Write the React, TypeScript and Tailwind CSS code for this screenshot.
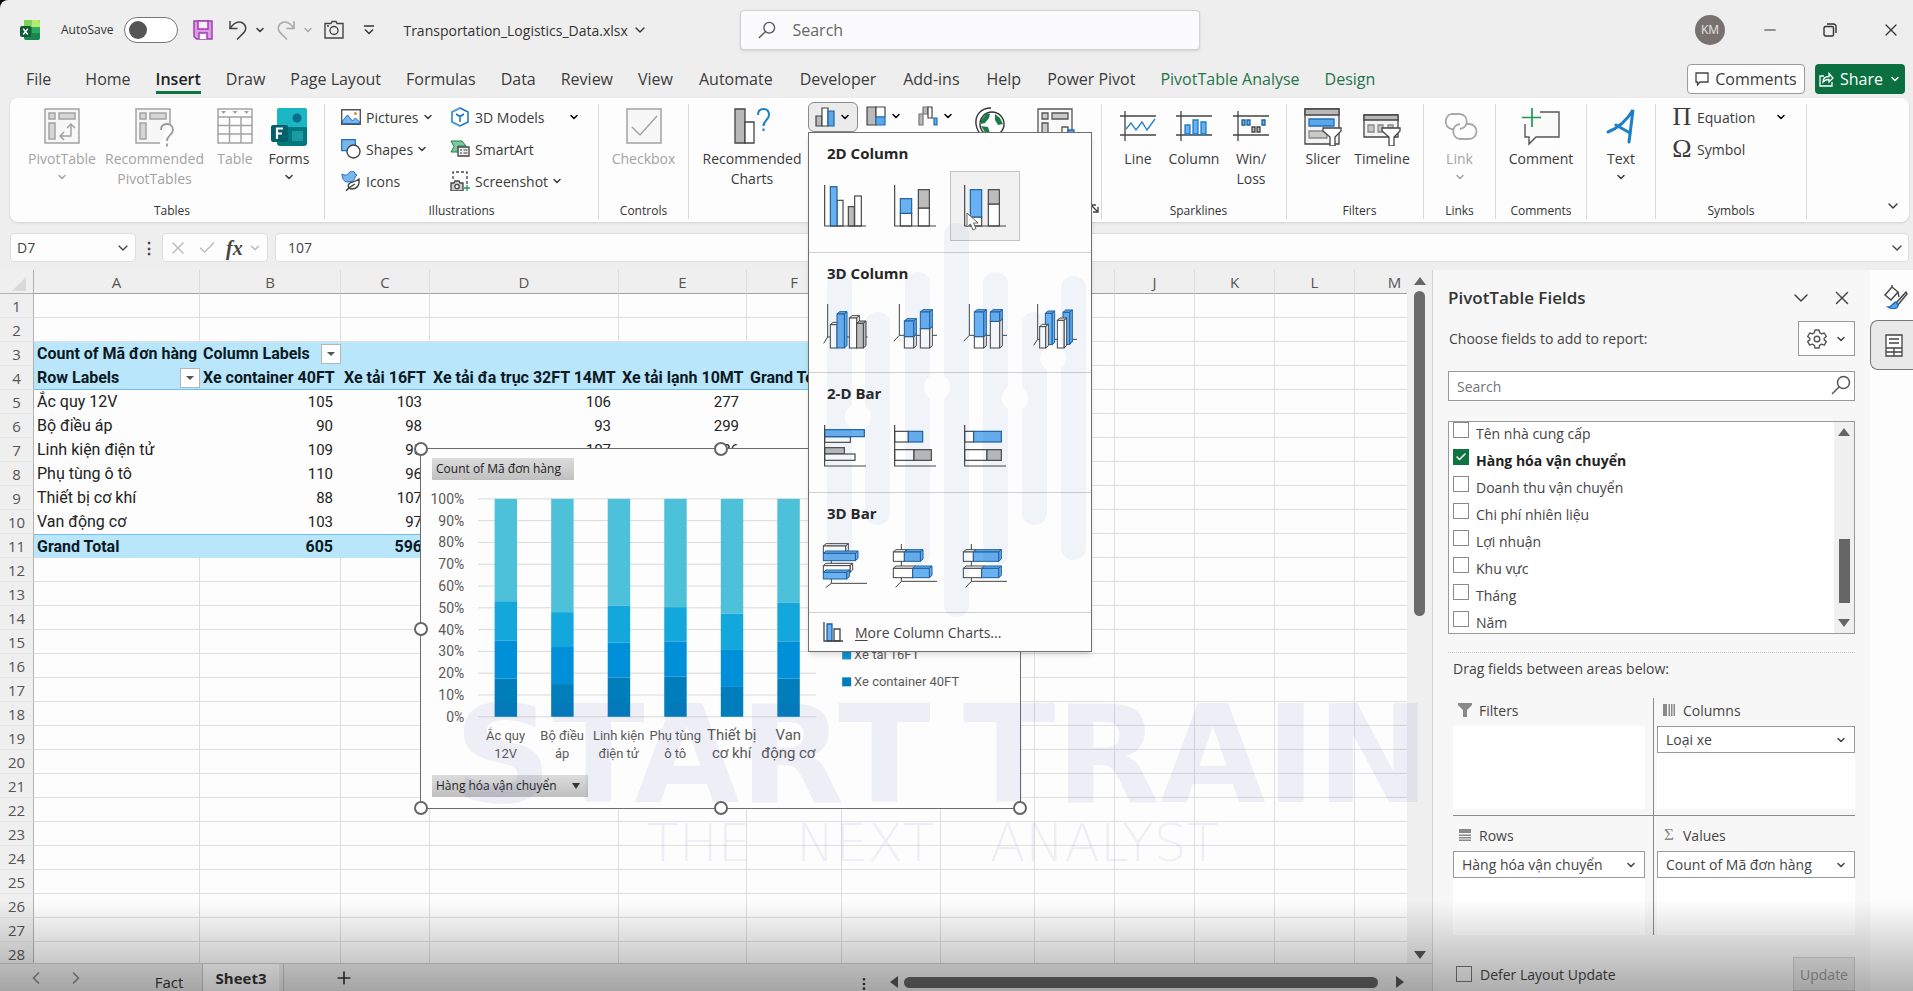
import React from 'react';
import { ChevronDown, ChevronLeft, ChevronRight, EllipsisVertical, Minus, Plus, X, Check } from 'lucide-react';

type IconProps = { className?: string };

const tabs = [
  'File', 'Home', 'Insert', 'Draw', 'Page Layout', 'Formulas', 'Data', 'Review', 'View',
  'Automate', 'Developer', 'Add-ins', 'Help', 'Power Pivot', 'PivotTable Analyse', 'Design',
];

const columns = [
  { name: 'A', width: 'w-[166px]' },
  { name: 'B', width: 'w-[141px]' },
  { name: 'C', width: 'w-[89px]' },
  { name: 'D', width: 'w-[189px]' },
  { name: 'E', width: 'w-[128px]' },
  { name: 'F', width: 'w-[95px]' },
  { name: 'G', width: 'w-[99px]' },
  { name: 'H', width: 'w-[94px]' },
  { name: 'I', width: 'w-[80px]' },
  { name: 'J', width: 'w-[80px]' },
  { name: 'K', width: 'w-[80px]' },
  { name: 'L', width: 'w-[80px]' },
  { name: 'M', width: 'w-[80px]' },
];

const cells: Record<number, string[]> = {
  3: ['Count of Mã đơn hàng', 'Column Labels'],
  4: ['Row Labels', 'Xe container 40FT', 'Xe tải 16FT', 'Xe tải đa trục 32FT 14MT', 'Xe tải lạnh 10MT', 'Grand Total'],
  5: ['Ắc quy 12V', '105', '103', '106', '277'],
  6: ['Bộ điều áp', '90', '98', '93', '299'],
  7: ['Linh kiện điện tử', '109', '95', '107', '286'],
  8: ['Phụ tùng ô tô', '110', '96'],
  9: ['Thiết bị cơ khí', '88', '107'],
  10: ['Van động cơ', '103', '97'],
  11: ['Grand Total', '605', '596'],
};

const fields = [
  'Tên nhà cung cấp', 'Hàng hóa vận chuyển', 'Doanh thu vận chuyển', 'Chi phí nhiên liệu',
  'Lợi nhuận', 'Khu vực', 'Tháng', 'Năm',
];

// cumulative share of each vehicle type, bottom to top
const bars = [
  { label: ['Ắc quy', '12V'], stops: [17.5, 35, 53] },
  { label: ['Bộ điều', 'áp'], stops: [15, 32, 48] },
  { label: ['Linh kiện', 'điện tử'], stops: [18, 34, 51] },
  { label: ['Phụ tùng', 'ô tô'], stops: [18.4, 34.6, 50.3] },
  { label: ['Thiết bị', 'cơ khí'], stops: [13.7, 31, 47.3] },
  { label: ['Van', 'động cơ'], stops: [17.5, 34.6, 52.3] },
];

const Caret = ({ className = '' }: IconProps) => (
  <ChevronDown className={`w-3 h-3 shrink-0 ${className}`} strokeWidth={3} />
);

/* ---------- title bar icons ---------- */

const ExcelLogo = () => (
  <svg className="w-5 h-5" viewBox="0 0 20 20">
    <rect x="4" y="0" width="16" height="20" rx="2" fill="#17864b" />
    <path d="M4 2a2 2 0 0 1 2-2h6v7H4z" fill="#7fd35b" />
    <path d="M12 0h6a2 2 0 0 1 2 2v5h-8z" fill="#b5ea6a" />
    <path d="M12 7h8v6h-8z" fill="#2fa862" />
    <rect x="0" y="6" width="11" height="11" rx="2" fill="#0d5c33" />
    <path d="M3.2 8.800l4.600 5.600M7.800 8.800l-4.600 5.600" stroke="#fff" strokeWidth="1.500" />
  </svg>
);

const SaveIcon = () => (
  <svg className="w-5 h-5" viewBox="0 0 20 20" fill="none" stroke="#a13fb0" strokeWidth="1.500">
    <path d="M1 1h18v18H3.500L1 16.500z" fill="#dd9be6" />
    <path d="M5 1h10v8H5z" fill="#fbeefc" />
    <path d="M6 19v-6h8v6" fill="#fff" />
  </svg>
);

const UndoIcon = ({ className = '' }: IconProps) => (
  <svg className={`w-5 h-5 ${className}`} viewBox="0 0 20 20" fill="none" stroke="currentColor" strokeWidth="1.500">
    <path d="M2 1v7.500h7.500" />
    <path d="M2 8.500C5 4 9 1 13 2.200c5 1.600 6 7 3 10.200L9 19.500" />
  </svg>
);

const CameraIcon = () => (
  <svg className="w-5 h-5" viewBox="0 0 20 20" fill="none" stroke="#444" strokeWidth="1.400">
    <path d="M1 3.500h6l1-2h4l1 2h6V18H1z" />
    <circle cx="10" cy="10.500" r="4" />
    <path d="M3 6h2" />
  </svg>
);

const SearchIcon = ({ className = '' }: IconProps) => (
  <svg className={className} viewBox="0 0 20 20" fill="none" stroke="#555" strokeWidth="1.500">
    <circle cx="12.500" cy="7.500" r="6" />
    <path d="M8.300 11.800L1 19" />
  </svg>
);

/* ---------- ribbon icons ---------- */

const PivotTableIcon = () => (
  <svg className="w-9 h-9" viewBox="0 0 36 36" fill="#d6d6d6" stroke="#a3a3a3" strokeWidth="1.500">
    <path d="M1 1h34v34H1z" fill="#f7f7f7" />
    <path d="M5 5h6v6H5zM15 5h16v6H15zM5 15h6v16H5z" />
    <path d="M17 28h10V17M20 24l-4 4 4 4M23 20l4-4 4 4" fill="none" />
  </svg>
);

const RecommendedPivotIcon = () => (
  <svg className="w-10 h-10" viewBox="0 0 40 40" fill="#d6d6d6" stroke="#a3a3a3" strokeWidth="1.500">
    <path d="M35 16V1H1v34h24" fill="#f7f7f7" />
    <path d="M5 5h6v6H5zM15 5h16v6H15zM5 15h6v16H5z" />
    <path d="M26 22c0-5 3-6 6-6s6 2 6 6c0 5-6 5-6 11M32 35.500v3" fill="none" stroke="#999" strokeWidth="1.800" />
  </svg>
);

const TableIcon = () => (
  <svg className="w-9 h-9" viewBox="0 0 36 36" fill="none" stroke="#a3a3a3" strokeWidth="1.500">
    <path d="M1 1h34v34H1zM1 9h34M1 17.500h34M1 26h34M12.500 9v26M24 9v26" />
    <path d="M4 3h5l-2.500 3zM15.500 3h5L18 6zM27 3h5l-2.500 3z" fill="#a3a3a3" stroke="none" />
  </svg>
);

const FormsIcon = () => (
  <svg className="w-9 h-[38px]" viewBox="0 0 36 38">
    <rect x="6" y="0" width="30" height="38" rx="3" fill="#03787c" />
    <path d="M9 0h24a3 3 0 0 1 3 3v16H6V3a3 3 0 0 1 3-3z" fill="#1bb6c4" />
    <circle cx="26" cy="10" r="4.500" fill="#0a6d8e" />
    <rect x="21" y="23" width="11" height="10" fill="#1a9ba1" />
    <rect x="0" y="17" width="17" height="17" rx="2" fill="#02606c" />
    <path d="M6 31V20.500h6M6 25.500h5" stroke="#fff" strokeWidth="2.200" fill="none" />
  </svg>
);

const PicturesIcon = () => (
  <svg className="w-5 h-4" viewBox="0 0 20 16">
    <path d="M.7.7h18.600v14.600H.7z" fill="#fff" stroke="#555" strokeWidth="1.400" />
    <path d="M1.500 12l5-6 5 6 3-3 4 4v1.500h-17z" fill="#7ab5ec" stroke="#1f6fc0" />
    <circle cx="14.500" cy="4.500" r="1.500" fill="#e08a3c" />
  </svg>
);

const ShapesIcon = () => (
  <svg className="w-5 h-5" viewBox="0 0 20 20">
    <path d="M.7.7h13.600v11H.7z" fill="#7ab5ec" stroke="#1f6fc0" strokeWidth="1.200" />
    <circle cx="12.500" cy="12.500" r="6.500" fill="#fff" stroke="#444" strokeWidth="1.400" />
  </svg>
);

const IconsIcon = () => (
  <svg className="w-5 h-5" viewBox="0 0 20 20">
    <path d="M1 3c3 2 6 1 7-1 2-3 6-2 6 1l2 1-2 2c0 4-4 5-8 5C3 11 1 7 1 3z" fill="#7ab5ec" stroke="#1f6fc0" />
    <path d="M18 8c1 6-2 10-7 10-4 0-5-4-2-6 3-2 6-1 9-4z" fill="#fff" stroke="#444" strokeWidth="1.300" />
    <path d="M5 20c3-4 6-5 9-7" stroke="#444" fill="none" strokeWidth="1.300" />
  </svg>
);

const CubeIcon = () => (
  <svg className="w-5 h-5" viewBox="0 0 20 20" fill="#fff" stroke="#1f6fc0" strokeWidth="1.500">
    <path d="M10 1l8 4v10l-8 4-8-4V5z" />
    <path d="M6 7l4 2.500L14 7M10 9.500V15" fill="none" />
    <path d="M10 1L2 5v10l8 4" stroke="#4e9de0" fill="none" />
  </svg>
);

const SmartArtIcon = () => (
  <svg className="w-5 h-5" viewBox="0 0 20 20">
    <path d="M1 2h11l4 5H8v6H1l3-5.500z" fill="#7fc79d" stroke="#1d7f49" />
    <path d="M8 8h11v9H8z" fill="#eee" stroke="#444" strokeWidth="1.300" />
    <path d="M10 11h2M13.500 11h4M10 14h2M13.500 14h4" stroke="#444" />
  </svg>
);

const ScreenshotIcon = () => (
  <svg className="w-5 h-5" viewBox="0 0 20 20" fill="none" stroke="#444" strokeWidth="1.300">
    <path d="M3 8V1h14v13" strokeDasharray="3 2" />
    <path d="M1 12h3l1-2h4l1 2h3v8H1z" fill="#ccc" />
    <circle cx="7" cy="15.500" r="2.200" fill="#fff" />
    <path d="M17 14v6M14 17h6" stroke="#1d9a55" />
  </svg>
);

const CheckboxIcon = () => (
  <svg className="w-9 h-9" viewBox="0 0 36 36" fill="#f7f7f7" stroke="#a3a3a3" strokeWidth="1.500">
    <path d="M1 1h34v34H1z" />
    <path d="M6 19l8 8L31 8" fill="none" />
  </svg>
);

const RecommendedChartsIcon = () => (
  <svg className="w-9 h-9" viewBox="0 0 36 36" stroke="#444" strokeWidth="1.300">
    <path d="M1 1h10v34H1z" fill="#b9b9b9" />
    <path d="M11 14h9v21h-9z" fill="#fff" />
    <path d="M24 7c0-4 2-6 5.500-6S35 3 35 7c0 5-5.500 5-5.500 11M29.500 20.500v2.500" fill="none" stroke="#1e7fc9" strokeWidth="2" />
  </svg>
);

const ColumnSmallIcon = () => (
  <svg className="w-5 h-5" viewBox="0 0 20 20" stroke="#444" strokeWidth="1.200">
    <path d="M1 9h6v10H1z" fill="#b9b9b9" />
    <path d="M7 1h6v18H7z" fill="#fff" />
    <path d="M13 4h6v15h-6z" fill="#5aa7ea" stroke="#1f5f9f" />
  </svg>
);

const TreemapIcon = () => (
  <svg className="w-5 h-5" viewBox="0 0 20 20" stroke="#444" strokeWidth="1.200">
    <path d="M1 1h9v18H1z" fill="#b9b9b9" />
    <path d="M10 1h9v10h-9z" fill="#fff" />
    <path d="M10 11h9v8h-9z" fill="#5aa7ea" stroke="#1f6fc0" />
  </svg>
);

const WaterfallIcon = () => (
  <svg className="w-5 h-5" viewBox="0 0 20 20" strokeWidth="1.200">
    <path d="M1 8h4v11H1z" fill="#b9b9b9" stroke="#777" />
    <path d="M5 1h5v7H5z" fill="#b9b9b9" stroke="#777" />
    <path d="M10 1h4v11h-4z" fill="#fff" stroke="#444" />
    <path d="M16 12h3v7h-3zM14 12h3" fill="#5aa7ea" stroke="#1f6fc0" />
  </svg>
);

const GlobeIcon = () => (
  <svg className="w-[30px] h-9" viewBox="0 0 30 36">
    <circle cx="17" cy="17" r="12" fill="#fff" stroke="#333" strokeWidth="1.400" />
    <path d="M6 13l6-7 3 1-1 4-4 5-4 1zM20 7l5 4 3 6-5 1-3-5zM6 19l7 1 2 6-4 1z" fill="#1c7c48" />
    <path d="M16 1C6 1 0 8 1 17c1 9 8 15 17 15" fill="none" stroke="#333" strokeWidth="1.400" />
  </svg>
);

const PivotChartIcon = () => (
  <svg className="w-[38px] h-9" viewBox="0 0 38 36" fill="#c9c9c9" stroke="#555" strokeWidth="1.300">
    <path d="M1 1h34v34H1z" fill="#fafafa" />
    <path d="M5 5h6v6H5zM15 5h16v6H15zM5 15h6v16H5z" />
    <path d="M25 19h6v16h-6z" fill="#fff" />
    <path d="M31 22h6v13h-6z" fill="#5aa7ea" stroke="#1f6fc0" />
  </svg>
);

const SparkFrame = ({ children }: { children: React.ReactNode }) => (
  <svg className="w-9 h-9" viewBox="0 0 36 36" fill="none" stroke="#444" strokeWidth="1.300">
    <path d="M0 8h36M0 27h36M5 3v30" />
    {children}
  </svg>
);

const SlicerIcon = () => (
  <svg className="w-[38px] h-[38px]" viewBox="0 0 38 38" stroke="#444" strokeWidth="1.300">
    <path d="M1 1h34v35H1z" fill="#f3f3f3" />
    <path d="M1 1h34v6H1z" fill="#b9b9b9" />
    <path d="M5 11h25v7H5z" fill="#5aa7ea" stroke="#1f6fc0" />
    <path d="M5 23h18v7H5z" fill="#c9c9c9" stroke="#888" />
    <path d="M19 20h18v3l-6 6v9h-5v-9l-7-6z" fill="#fff" />
  </svg>
);

const TimelineIcon = () => (
  <svg className="w-[38px] h-[38px]" viewBox="0 0 38 38" stroke="#444" strokeWidth="1.300">
    <path d="M1 7h34v22H1z" fill="#f3f3f3" />
    <path d="M1 7h34v5H1z" fill="#b9b9b9" />
    <path d="M5 17h6v7H5zM15 17h5v7h-5zM25 17h5v7h-5z" fill="#c9c9c9" stroke="#888" />
    <path d="M19 20h18v3l-6 6v9h-5v-9l-7-6z" fill="#fff" />
  </svg>
);

const LinkIcon = () => (
  <svg className="w-9 h-9" viewBox="0 0 36 36" fill="none" stroke="#a8a8a8" strokeWidth="1.800">
    <path d="M12 21H9a8 8 0 0 1 0-15h9c9 1 9 13 0 15" />
    <path d="M24 16h3a7 7 0 0 1 0 15h-9c-9-1-9-14 0-15" />
  </svg>
);

const CommentIcon = () => (
  <svg className="w-[38px] h-[38px]" viewBox="0 0 38 38" fill="none" stroke="#555" strokeWidth="1.400">
    <path d="M18 4h19v25H14l-7 7v-7H3V16" fill="#fafafa" />
    <path d="M10 0v19M0 9.500h19" stroke="#1d9a55" strokeWidth="1.700" />
  </svg>
);

const TextIcon = () => (
  <svg className="w-9 h-9" viewBox="0 0 36 36" fill="none" stroke="#1e7fc9" strokeWidth="3" strokeLinecap="round">
    <path d="M5 24C15 20 24 12 30 2l-4 32" />
    <path d="M13 17l14 8" />
  </svg>
);

/* ---------- chart gallery icons ---------- */

const BLUE = '#69b1f0';
const GRAY = '#bcbcbc';
const WHITE = '#fff';

type Part = { x: number; y: number; w: number; h: number; fill: string };

const edge = (fill: string) => (fill === BLUE ? '#1d5f9e' : '#444');

const Gallery = ({ children }: { children: React.ReactNode }) => (
  <svg className="w-12 h-12" viewBox="0 0 144 144" fill="none" stroke="#444" strokeWidth="3.500">
    {children}
  </svg>
);

const Flat = ({ parts }: { parts: Part[] }) => (
  <Gallery>
    {parts.map((p, i) => (
      <rect key={i} x={p.x} y={p.y} width={p.w} height={p.h} fill={p.fill} stroke={edge(p.fill)} />
    ))}
    <path d="M11 9V132H135" />
  </Gallery>
);

const Solid = ({ parts, axis }: { parts: Part[]; axis: string }) => (
  <Gallery>
    <path d={axis} strokeWidth="3" />
    {parts.map((p, i) => (
      <g key={i} fill={p.fill} stroke={edge(p.fill)} strokeWidth="3">
        <path d={`M${p.x} ${p.y}l8 -7h${p.w}l-8 7z`} />
        <path d={`M${p.x + p.w} ${p.y}l8 -7v${p.h}l-8 7z`} />
        <rect x={p.x} y={p.y} width={p.w} height={p.h} />
      </g>
    ))}
  </Gallery>
);

const sections = [
  {
    title: '2D Column',
    items: [
      <Flat parts={[
        { x: 48, y: 55, w: 18, h: 77, fill: WHITE }, { x: 28, y: 14, w: 20, h: 118, fill: BLUE },
        { x: 82, y: 74, w: 18, h: 58, fill: GRAY }, { x: 101, y: 42, w: 20, h: 90, fill: WHITE },
      ]} />,
      <Flat parts={[
        { x: 28, y: 94, w: 34, h: 38, fill: WHITE }, { x: 28, y: 50, w: 34, h: 44, fill: BLUE },
        { x: 82, y: 78, w: 33, h: 54, fill: WHITE }, { x: 82, y: 23, w: 33, h: 55, fill: GRAY },
      ]} />,
      <Flat parts={[
        { x: 28, y: 105, w: 34, h: 27, fill: WHITE }, { x: 28, y: 23, w: 34, h: 82, fill: BLUE },
        { x: 82, y: 66, w: 33, h: 66, fill: WHITE }, { x: 82, y: 23, w: 33, h: 43, fill: GRAY },
      ]} />,
    ],
  },
  {
    title: '3D Column',
    items: [
      <Solid axis="M20 6V105H140M20 105L8 124" parts={[
        { x: 28, y: 68, w: 20, h: 70, fill: WHITE }, { x: 48, y: 36, w: 22, h: 102, fill: BLUE },
        { x: 85, y: 48, w: 22, h: 90, fill: WHITE }, { x: 107, y: 64, w: 20, h: 74, fill: GRAY },
      ]} />,
      <Solid axis="M25 6V100H138M25 100L8 118" parts={[
        { x: 40, y: 104, w: 28, h: 34, fill: WHITE }, { x: 40, y: 57, w: 28, h: 47, fill: BLUE },
        { x: 88, y: 80, w: 28, h: 58, fill: WHITE }, { x: 88, y: 30, w: 28, h: 50, fill: BLUE },
      ]} />,
      <Solid axis="M25 6V100H138M25 100L8 118" parts={[
        { x: 40, y: 104, w: 28, h: 34, fill: WHITE }, { x: 40, y: 30, w: 28, h: 74, fill: BLUE },
        { x: 88, y: 58, w: 28, h: 80, fill: WHITE }, { x: 88, y: 30, w: 28, h: 28, fill: BLUE },
      ]} />,
      <Solid axis="M20 6V112H138M20 112L8 130" parts={[
        { x: 43, y: 34, w: 20, h: 94, fill: BLUE }, { x: 96, y: 31, w: 20, h: 96, fill: BLUE },
        { x: 26, y: 74, w: 18, h: 64, fill: WHITE }, { x: 79, y: 55, w: 20, h: 83, fill: WHITE },
      ]} />,
    ],
  },
  {
    title: '2-D Bar',
    items: [
      <Flat parts={[
        { x: 11, y: 44, w: 77, h: 17, fill: WHITE }, { x: 11, y: 23, w: 119, h: 21, fill: BLUE },
        { x: 11, y: 77, w: 59, h: 19, fill: GRAY }, { x: 11, y: 96, w: 91, h: 19, fill: WHITE },
      ]} />,
      <Flat parts={[
        { x: 11, y: 28, w: 41, h: 32, fill: WHITE }, { x: 52, y: 28, w: 43, h: 32, fill: BLUE },
        { x: 11, y: 83, w: 58, h: 32, fill: WHITE }, { x: 69, y: 83, w: 52, h: 32, fill: GRAY },
      ]} />,
      <Flat parts={[
        { x: 11, y: 28, w: 27, h: 32, fill: WHITE }, { x: 38, y: 28, w: 83, h: 32, fill: BLUE },
        { x: 11, y: 83, w: 67, h: 32, fill: WHITE }, { x: 78, y: 83, w: 43, h: 32, fill: GRAY },
      ]} />,
    ],
  },
  {
    title: '3D Bar',
    items: [
      <Solid axis="M31 3V124H138M31 124L14 137" parts={[
        { x: 7, y: 12, w: 67, h: 20, fill: WHITE }, { x: 7, y: 34, w: 96, h: 22, fill: BLUE },
        { x: 7, y: 71, w: 80, h: 20, fill: WHITE }, { x: 7, y: 91, w: 70, h: 20, fill: BLUE },
      ]} />,
      <Solid axis="M31 6V118H138M31 118L14 136" parts={[
        { x: 7, y: 30, w: 33, h: 28, fill: WHITE }, { x: 40, y: 30, w: 48, h: 28, fill: BLUE },
        { x: 7, y: 79, w: 58, h: 28, fill: WHITE }, { x: 65, y: 79, w: 50, h: 28, fill: BLUE },
      ]} />,
      <Solid axis="M31 6V118H138M31 118L14 136" parts={[
        { x: 7, y: 30, w: 30, h: 28, fill: WHITE }, { x: 37, y: 30, w: 76, h: 28, fill: BLUE },
        { x: 7, y: 79, w: 55, h: 28, fill: WHITE }, { x: 62, y: 79, w: 51, h: 28, fill: BLUE },
      ]} />,
    ],
  },
];

const ChartMenu = () => (
  <div className="absolute top-full left-0 z-20 w-[284px] border border-[#6f6f6f] bg-[#fdfdfd] shadow-md">
    {sections.map((section) => (
      <div key={section.title} className="h-[120px] border-b border-[#cfcfcf]">
        <h3 className="h-[38px] pt-2 pl-[18px] text-[15px] leading-6 font-bold text-[#262626]">{section.title}</h3>
        <div className="flex pl-[1px]">
          {section.items.map((item, i) => (
            <button
              key={i}
              aria-label={`${section.title} ${i + 1}`}
              className={`w-[70px] h-[70px] flex items-center justify-center relative ${
                section.title === '2D Column' && i === 2 ? 'bg-[#f1f1f1] border border-[#c4c4c4]' : ''
              }`}
            >
              {item}
              {section.title === '2D Column' && i === 2 && (
                <svg className="absolute left-[15px] top-10 w-4 h-5" viewBox="0 0 16 20">
                  <path d="M1 1v14l3.500-3 2.500 6 3-1.500-2.500-5.500H12z" fill="#fff" stroke="#666" />
                </svg>
              )}
            </button>
          ))}
        </div>
      </div>
    ))}
    <button className="w-full h-[38px] flex items-center gap-3 pl-[14px] text-[14px] text-[#444]">
      <svg className="w-5 h-5" viewBox="0 0 20 20" stroke="#444" fill="none" strokeWidth="1.300">
        <path d="M4 2h5v17H4z" fill={BLUE} stroke="#1d5f9e" />
        <path d="M11 7h6v12h-6z" fill="#fff" />
        <path d="M1 0v19h19" />
      </svg>
      <span><span className="underline underline-offset-2">M</span>ore Column Charts...</span>
    </button>
  </div>
);

/* ---------- ribbon ---------- */

const Group = ({ label, className, children }: { label?: string; className: string; children: React.ReactNode }) => (
  <div className={`mt-[6px] mb-[3px] flex flex-col border-r border-[#d9d9d9] ${className}`}>
    <div className="h-[99px] flex">{children}</div>
    <div className="h-4 text-center text-[12px] leading-4 text-[#333]">{label}</div>
  </div>
);

type BigProps = { icon: React.ReactNode; lines: string[]; className: string; caret?: boolean; disabled?: boolean };

const BigButton = ({ icon, lines, className, caret, disabled }: BigProps) => (
  <button
    disabled={disabled}
    className={`h-24 flex flex-col items-center text-[14px] leading-5 whitespace-nowrap shrink-0 ${
      disabled ? 'text-[#a3a3a3]' : 'text-[#3b3b3b]'
    } ${className}`}
  >
    <span className="h-[45px] flex items-start justify-center pt-1">{icon}</span>
    {lines.map((line) => <span key={line}>{line}</span>)}
    {caret && <Caret className="mt-[2px]" />}
  </button>
);

const SmallButton = ({ icon, label, caret }: { icon: React.ReactNode; label: string; caret?: boolean }) => (
  <button className="h-8 flex items-center gap-1 text-[14px] text-[#3b3b3b] whitespace-nowrap">
    <span className="w-5 mr-[1px] flex justify-center">{icon}</span>
    {label}
    {caret && <Caret className="-ml-[1px]" />}
  </button>
);

const Ribbon = () => (
  <div className="h-[124px] mx-[10px] mr-1 flex shrink-0 bg-[#fdfdfd] rounded-lg shadow">
    <Group label="Tables" className="w-[315px] pl-[10px]">
      <BigButton icon={<PivotTableIcon />} lines={['PivotTable']} caret disabled className="w-[84px]" />
      <BigButton icon={<RecommendedPivotIcon />} lines={['Recommended', 'PivotTables']} disabled className="w-[101px]" />
      <BigButton icon={<TableIcon />} lines={['Table']} disabled className="w-[60px]" />
      <BigButton icon={<FormsIcon />} lines={['Forms']} caret className="w-[48px]" />
    </Group>
    <Group label="Illustrations" className="w-[274px]">
      <div className="w-[109px] ml-4 -mt-[3px] flex flex-col">
        <SmallButton icon={<PicturesIcon />} label="Pictures" caret />
        <SmallButton icon={<ShapesIcon />} label="Shapes" caret />
        <SmallButton icon={<IconsIcon />} label="Icons" />
      </div>
      <div className="flex-1 -mt-[3px] flex flex-col">
        <div className="flex items-center gap-6">
          <SmallButton icon={<CubeIcon />} label="3D Models" />
          <Caret />
        </div>
        <SmallButton icon={<SmartArtIcon />} label="SmartArt" />
        <SmallButton icon={<ScreenshotIcon />} label="Screenshot" caret />
      </div>
    </Group>
    <Group label="Controls" className="w-[90px] items-center">
      <BigButton icon={<CheckboxIcon />} lines={['Checkbox']} disabled className="w-[84px]" />
    </Group>
    <Group label="" className="w-[413px] relative">
      <BigButton icon={<RecommendedChartsIcon />} lines={['Recommended', 'Charts']} className="w-[106px] ml-[10px]" />
      <div className="relative h-[30px] ml-[3px] -mt-[2px]">
        <button aria-label="Column chart" className="h-[30px] w-[50px] flex items-center justify-center gap-1 bg-[#ebebeb] border border-[#8a8a8a] rounded-md">
          <ColumnSmallIcon />
          <Caret />
        </button>
        <ChartMenu />
      </div>
      <button aria-label="Hierarchy chart" className="h-7 -mt-[2px] ml-2 flex items-center gap-1"><TreemapIcon /><Caret /></button>
      <button aria-label="Waterfall chart" className="h-7 -mt-[2px] ml-4 flex items-center gap-1"><WaterfallIcon /><Caret /></button>
      <button aria-label="Maps" className="h-11 ml-[21px] flex items-start pt-[3px]"><GlobeIcon /></button>
      <button aria-label="PivotChart" className="h-11 ml-[32px] flex items-start pt-1"><PivotChartIcon /></button>
      <svg className="absolute right-[2px] bottom-[6px] w-[9px] h-[9px]" viewBox="0 0 9 9" fill="none" stroke="#444" strokeWidth="1.400">
        <path d="M1 1l7 7M8 3v5H3M1 4V1h5" />
      </svg>
    </Group>
    <Group label="Sparklines" className="w-[185px] pl-[9px]">
      <BigButton
        icon={<SparkFrame><path d="M6 21l5-6 5 7 6-8 5 8 8-11" stroke="#1e7fc9" /></SparkFrame>}
        lines={['Line']}
        className="w-[54px]"
      />
      <BigButton
        icon={<SparkFrame><path d="M9 17h5v9H9zM17 12h5v14h-5zM25 14h5v12h-5z" fill={BLUE} stroke="#1e7fc9" /></SparkFrame>}
        lines={['Column']}
        className="w-[58px]"
      />
      <BigButton
        icon={<SparkFrame><path d="M9 12h3v5H9zM14 12h3v5h-3zM29 12h3v5h-3z" fill={BLUE} stroke="#1f5f9f" /><path d="M19 19h3v5h-3zM24 19h3v5h-3z" fill={GRAY} /></SparkFrame>}
        lines={['Win/', 'Loss']}
        className="w-[56px]"
      />
    </Group>
    <Group label="Filters" className="w-[137px] pl-[9px]">
      <BigButton icon={<SlicerIcon />} lines={['Slicer']} className="w-[54px]" />
      <BigButton icon={<TimelineIcon />} lines={['Timeline']} className="w-[64px]" />
    </Group>
    <Group label="Links" className="w-[72px] items-center">
      <BigButton icon={<LinkIcon />} lines={['Link']} caret disabled className="w-[64px]" />
    </Group>
    <Group label="Comments" className="w-[91px] items-center">
      <BigButton icon={<CommentIcon />} lines={['Comment']} className="w-[84px]" />
    </Group>
    <Group className="w-[69px] items-center">
      <BigButton icon={<TextIcon />} lines={['Text']} caret className="w-[64px]" />
    </Group>
    <Group label="Symbols" className="w-[151px]">
      <div className="ml-4 -mt-[3px] flex flex-col">
        <div className="flex items-center gap-5">
          <SmallButton icon={<span className="font-['Liberation_Serif',serif] text-[26px] leading-6">Π</span>} label="Equation" />
          <Caret />
        </div>
        <SmallButton icon={<span className="font-['Liberation_Serif',serif] text-[26px] leading-6">Ω</span>} label="Symbol" />
      </div>
    </Group>
    <div className="flex-1 flex items-end justify-end pr-2 pb-2">
      <button aria-label="Collapse ribbon"><ChevronDown className="w-4 h-4 text-[#333]" /></button>
    </div>
  </div>
);

/* ---------- sheet ---------- */

const FilterButton = () => (
  <button aria-label="Filter" className="w-5 h-5 shrink-0 flex items-center justify-center bg-white border border-[#b5b5b5]">
    <span className="border-x-4 border-t-4 border-x-transparent border-t-[#555]" />
  </button>
);

const Sheet = () => (
  <table className="table-fixed border-separate border-spacing-0 w-[1435px] font-['Roboto',sans-serif] text-[15px]">
    <thead>
      <tr className="h-6 font-['Open_Sans',sans-serif] text-[#555]">
        <th className="w-[34px] border-b border-r border-[#b0b0b0] bg-[#efefef]">
          <span className="block ml-3 mt-1 w-0 h-0 border-l-[14px] border-b-[14px] border-l-transparent border-b-[#dadada]" />
        </th>
        {columns.map((c) => (
          <th key={c.name} className={`${c.width} h-6 p-0 font-normal leading-5 border-b border-b-[#a0a0a0] border-r border-r-[#dcdcdc] bg-[#efefef]`}>{c.name}</th>
        ))}
      </tr>
    </thead>
    <tbody>
      {Array.from({ length: 28 }, (_, i) => i + 1).map((row) => {
        const heading = row === 3 || row === 4 || row === 11;
        return (
          <tr key={row} className="h-6">
            <th className="h-6 p-0 font-normal leading-5 font-['Open_Sans',sans-serif] text-[#555] bg-[#efefef] border-r border-r-[#b0b0b0] border-b border-b-[#e4e4e4]">{row}</th>
            {columns.map((c, i) => {
              const pivot = row >= 3 && row <= 11 && i < 6;
              const text = cells[row]?.[i];
              let look = 'border-b border-r border-[#dedede]';
              if (pivot && heading) look = 'bg-[#b9e6fa] font-bold text-[16px] text-[#0c1a24]';
              if (pivot && !heading) look = i === 0 ? 'text-[16px] text-[#222]' : 'text-[#222]';
              if (pivot && row === 4) look += ' border-b border-[#6fc3ea]';
              if (pivot && row === 11) look += ' border-t border-[#6fc3ea]';
              return (
                <td key={c.name} className={`h-6 p-0 whitespace-nowrap overflow-hidden leading-5 ${look}`}>
                  {text && (
                    <div className={`flex items-center pl-[3px] ${i > 0 && !(row === 3 || row === 4) ? 'justify-end pr-2' : 'justify-between'}`}>
                      {text}
                      {((row === 3 && i === 1) || (row === 4 && i === 0)) && <FilterButton />}
                    </div>
                  )}
                </td>
              );
            })}
          </tr>
        );
      })}
    </tbody>
  </table>
);

const handles = [
  'left-0 top-0', 'left-1/2 top-0', 'left-0 top-1/2', 'left-0 top-full',
  'left-1/2 top-full', 'left-full top-full',
];

const PivotChart = () => (
  <div className="absolute left-[420px] top-[178px] w-[601px] h-[361px] bg-[#fdfdfd] border border-[#6b6b6b]">
    <svg className="block w-full h-full" viewBox="0 0 600 360" fontFamily="Roboto, sans-serif">
      {Array.from({ length: 11 }, (_, i) => (
        <g key={i}>
          <path d={`M57 ${50 + i * 21.85}H396`} stroke="#d9d9d9" />
          <text x="43" y={55 + i * 21.85} textAnchor="end" fontSize="14" fill="#595959">{100 - i * 10}%</text>
        </g>
      ))}
      {bars.map((bar, i) => {
        const x = 73.5 + i * 56.7;
        const [a, b, c] = bar.stops.map((s) => 268.5 - s * 2.185);
        const big = i > 3;
        return (
          <g key={i}>
            <rect x={x} y={50} width="22.500" height={c - 50} fill="#4dc0da" />
            <rect x={x} y={c} width="22.500" height={b - c} fill="#14a7db" />
            <rect x={x} y={b} width="22.500" height={a - b} fill="#0090da" />
            <rect x={x} y={a} width="22.500" height={268.5 - a} fill="#007dbb" />
            {bar.label.map((line, n) => (
              <text key={line} x={x + 11} y={292 + n * 18} textAnchor="middle" fontSize={big ? 15 : 13} fill="#595959">{line}</text>
            ))}
          </g>
        );
      })}
      <rect x="422" y="202" width="9" height="9" fill="#0f93cf" />
      <text x="434" y="211" fontSize="13" fill="#595959">Xe tải 16FT</text>
      <rect x="422" y="229" width="9" height="9" fill="#007dbb" />
      <text x="434" y="238" fontSize="13" fill="#595959">Xe container 40FT</text>
    </svg>
    <button className="absolute left-[11px] top-[9px] w-[142px] h-[22px] px-1 text-left text-[12px] text-[#222] whitespace-nowrap bg-gradient-to-b from-[#dcdcdc] to-[#c0c0c0]">
      Count of Mã đơn hàng
    </button>
    <button className="absolute left-[11px] top-[326px] w-[156px] h-[22px] px-1 flex items-center justify-between text-[12px] text-[#222] whitespace-nowrap bg-gradient-to-b from-[#dcdcdc] to-[#c0c0c0]">
      Hàng hóa vận chuyển
      <span className="mr-1 border-x-4 border-t-[6px] border-x-transparent border-t-[#333]" />
    </button>
    {handles.map((h) => (
      <span key={h} className={`absolute w-[14px] h-[14px] -translate-x-1/2 -translate-y-1/2 rounded-full bg-white border-2 border-[#666] ${h}`} />
    ))}
  </div>
);

const SheetTabs = () => (
  <div className="h-7 flex shrink-0 bg-[#ececec] border-t border-[#cfcfcf] text-[#333]">
    <div className="w-[128px] flex items-center gap-5 pl-[26px] text-[#888]">
      <button aria-label="Previous sheet"><ChevronLeft className="w-5 h-5" /></button>
      <button aria-label="Next sheet"><ChevronRight className="w-5 h-5" /></button>
    </div>
    <button className="w-[75px] pt-2 text-[15px] leading-5 text-center border-r border-[#c4c4c4]">
      <span className="pl-2">Fact</span>
    </button>
    <button className="w-[76px] text-[15px] leading-6 font-bold bg-[#fdfdfd]">Sheet3</button>
    <button aria-label="New sheet" className="w-[120px] ml-1 flex items-center justify-center border-l border-[#c4c4c4]"><Plus className="w-5 h-5" /></button>
    <div className="flex-1 flex items-center justify-end pt-3 pr-3"><EllipsisVertical className="w-4 h-4" /></div>
    <div className="w-[548px] shrink-0 flex items-center gap-[6px] pt-[9px] pr-7 pl-[6px]">
      <span className="border-y-[6px] border-r-8 border-y-transparent border-r-[#555]" />
      <span className="flex-1 h-[11px] rounded-full bg-[#636363]" />
      <span className="ml-3 border-y-[6px] border-l-8 border-y-transparent border-l-[#555]" />
    </div>
  </div>
);

/* ---------- field list ---------- */

const Area = ({ icon, label, value, className }: { icon: React.ReactNode; label: string; value?: string; className: string }) => (
  <div className={`flex flex-col ${className}`}>
    <div className="h-6 mb-1 flex items-center gap-1 pl-[2px] text-[14px] text-[#444]">
      <span className="w-5 flex justify-center text-[#888]">{icon}</span>
      {label}
    </div>
    <div className="flex-1 bg-[#fefefe]">
      {value && (
        <label className="relative block">
          <select aria-label={label} className="w-full h-[27px] pl-2 pr-6 appearance-none bg-white border border-[#9a9a9a] text-[14px] leading-5 text-[#444]">
            <option>{value}</option>
          </select>
          <Caret className="absolute right-2 top-2 text-[#444]" />
        </label>
      )}
    </div>
  </div>
);

const FieldList = () => (
  <aside className="w-[438px] shrink-0 pl-[15px] pr-[15px] flex flex-col bg-[#f7f7f7] border-l border-[#d4d4d4] text-[#444]">
    <div className="h-[51px] pt-1 flex items-center">
      <h2 className="flex-1 text-[17px] font-semibold text-[#333]">PivotTable Fields</h2>
      <button aria-label="Pane options" className="mr-[18px]"><ChevronDown className="w-6 h-6" strokeWidth={1.5} /></button>
      <button aria-label="Close pane" className="mr-[2px]"><X className="w-[22px] h-[22px]" strokeWidth={1.5} /></button>
    </div>
    <div className="h-[35px] flex items-center justify-between">
      <span className="pl-[1px] text-[14px]">Choose fields to add to report:</span>
      <button aria-label="Tools" className="w-[57px] h-[35px] flex items-center justify-center gap-2 bg-[#fdfdfd] border border-[#9a9a9a]">
        <svg className="w-5 h-5" viewBox="0 0 20 20" fill="none" stroke="#555" strokeWidth="1.400" strokeLinejoin="round">
          <path d="M8 1h4l.6 2.700 2 1.200 2.700-.9 2 3.500L17.200 9.300v1.600l2.100 1.700-2 3.500-2.700-.9-2 1.200L12 19H8l-.6-2.600-2-1.200-2.700.9-2-3.500 2.100-1.700V9.300L.7 7.500l2-3.500 2.700.9 2-1.200z" />
          <circle cx="10" cy="10" r="2.800" />
        </svg>
        <Caret />
      </button>
    </div>
    <label className="relative block mt-[15px]">
      <input aria-label="Search fields" placeholder="Search" className="w-full h-[30px] pl-2 text-[14px] bg-white border border-[#9a9a9a] placeholder:text-[#777]" />
      <SearchIcon className="absolute right-1 top-1 w-5 h-5" />
    </label>
    <div className="mt-5 h-[213px] flex bg-white border border-[#9a9a9a] overflow-hidden">
      <ul className="flex-1 pl-1">
        {fields.map((field, i) => (
          <li key={field} className="h-[27px]">
            <label className="flex items-start gap-[7px]">
              <span className="relative w-4 h-4 shrink-0">
                <input type="checkbox" defaultChecked={i === 1} className="block w-4 h-4 appearance-none bg-white border border-[#8a8a8a] checked:bg-[#0f7540] checked:border-[#0f7540]" />
                {i === 1 && <Check className="absolute left-[2px] top-[2px] w-3 h-3 text-white" strokeWidth={3} />}
              </span>
              <span className={`text-[14px] leading-6 ${i === 1 ? 'font-bold text-[#222]' : ''}`}>{field}</span>
            </label>
          </li>
        ))}
      </ul>
      <div className="w-5 flex flex-col items-center py-[6px] bg-[#f0f0f0]">
        <span className="border-x-[6px] border-b-8 border-x-transparent border-b-[#666]" />
        <span className="mt-auto w-[11px] h-16 bg-[#666]" />
        <span className="mt-4 border-x-[6px] border-t-8 border-x-transparent border-t-[#666]" />
      </div>
    </div>
    <div className="mt-[18px] border-t border-dotted border-[#cfcfcf]" />
    <p className="h-[45px] pt-1 pl-[5px] text-[14px] leading-6">Drag fields between areas below:</p>
    <div className="ml-[5px] grid grid-cols-[201px_1fr] grid-rows-[118px_119px]">
      <Area
        label="Filters"
        className="pr-2 pb-[6px] border-r border-b border-[#8a8a8a]"
        icon={<svg className="w-[14px] h-[14px]" viewBox="0 0 14 14"><path d="M0 0h14v2L9 7v7H5V7L0 2z" fill="#8a8a8a" /></svg>}
      />
      <Area
        label="Columns"
        value="Loại xe"
        className="pl-[3px] pb-[6px] border-b border-[#8a8a8a]"
        icon={<svg className="w-3 h-3" viewBox="0 0 12 12"><path d="M0 0h4v12H0zM5.500 0H7v12H5.500zM8 0h1.500v12H8zM10.500 0H12v12h-1.500z" fill="#8a8a8a" /></svg>}
      />
      <Area
        label="Rows"
        value="Hàng hóa vận chuyển"
        className="pt-[7px] pr-2 border-r border-[#8a8a8a]"
        icon={<svg className="w-3 h-3" viewBox="0 0 12 12"><path d="M0 0h12v4H0zM0 5.500h12V7H0zM0 8h12v1.500H0zM0 10.500h12V12H0z" fill="#8a8a8a" /></svg>}
      />
      <Area
        label="Values"
        value="Count of Mã đơn hàng"
        className="pl-[3px] pt-[7px]"
        icon={<span className="font-['Liberation_Serif',serif] text-[17px]">Σ</span>}
      />
    </div>
    <div className="mt-[22px] h-[34px] shrink-0 flex items-center justify-between text-[14px]">
      <label className="flex items-center gap-2 pl-2">
        <input type="checkbox" className="w-4 h-4 appearance-none border border-[#777]" />
        Defer Layout Update
      </label>
      <button disabled className="w-[62px] h-[34px] bg-[#eaeaea] border border-[#d0d0d0] text-[#999]">Update</button>
    </div>
  </aside>
);

/* ---------- watermark ---------- */

const Watermark = () => (
  <div className="absolute inset-0 z-30 pointer-events-none text-[#3a45a8] opacity-[0.07] select-none" aria-hidden="true">
    <svg className="absolute left-[809px] top-[223px] w-[280px] h-[394px] opacity-80" viewBox="0 0 280 394">
      <mask id="dots">
        <rect width="280" height="394" fill="#fff" />
        <circle cx="49" cy="194" r="13" />
        <circle cx="128" cy="164" r="13" />
        <circle cx="206" cy="175" r="13" />
        <circle cx="244" cy="135" r="13" />
      </mask>
      <g mask="url(#dots)" fill="#2f5aa8">
        <rect x="18" y="49" width="25" height="294" rx="12" />
        <rect x="56" y="89" width="25" height="213" rx="12" />
        <rect x="96" y="49" width="25" height="294" rx="12" />
        <rect x="135" y="0" width="25" height="394" rx="12" />
        <rect x="174" y="49" width="25" height="294" rx="12" />
        <rect x="213" y="89" width="25" height="213" rx="12" />
        <rect x="252" y="53" width="25" height="284" rx="12" />
      </g>
    </svg>
    <div className="absolute left-[454px] top-[687px] flex gap-8 font-['DejaVu_Sans',sans-serif] font-bold text-[136px] leading-[136px]">
      <span>START</span>
      <span>TRAIN</span>
    </div>
    <div className="absolute left-[647px] top-[817px] grid grid-cols-[149px_194px_auto] font-['DejaVu_Sans',sans-serif] font-extralight text-[52px] leading-[52px]">
      <span>THE</span>
      <span>NEXT</span>
      <span>ANALYST</span>
    </div>
  </div>
);

/* ---------- page ---------- */

const TitleBar = () => (
  <header className="h-[60px] shrink-0 flex items-center pl-5 pr-3 text-[#333]">
    <ExcelLogo />
    <label className="ml-[21px] flex items-center gap-[11px] text-[12px]">
      AutoSave
      <input
        type="checkbox"
        className="w-[54px] h-[26px] appearance-none rounded-full bg-white border border-[#777] flex items-center pl-1 before:w-[18px] before:h-[18px] before:rounded-full before:bg-[#555]"
      />
    </label>
    <button aria-label="Save" className="ml-[15px]"><SaveIcon /></button>
    <button aria-label="Undo" className="ml-[15px] flex items-center gap-[6px]"><UndoIcon className="text-[#444]" /><Caret /></button>
    <button aria-label="Redo" className="ml-[10px] flex items-center gap-[6px] text-[#a8a8a8]"><UndoIcon className="-scale-x-100" /><Caret /></button>
    <button aria-label="Camera" className="ml-[10px]"><CameraIcon /></button>
    <button aria-label="Customise toolbar" className="ml-5">
      <svg className="w-[10px] h-[10px]" viewBox="0 0 10 10" fill="none" stroke="#333" strokeWidth="1.500"><path d="M0 1h10M1 4.500l4 4 4-4" /></svg>
    </button>
    <button className="ml-[29px] w-[337px] flex items-center gap-1 text-[14px] whitespace-nowrap">
      Transportation_Logistics_Data.xlsx
      <ChevronDown className="w-4 h-4" />
    </button>
    <label className="w-[460px] h-10 flex items-center gap-4 pl-[17px] bg-[#fbfafc] border border-[#d2d2d2] rounded shadow-sm">
      <SearchIcon className="w-[18px] h-[18px]" />
      <input aria-label="Search" placeholder="Search" className="flex-1 bg-transparent text-[16px] placeholder:text-[#666]" />
    </label>
    <div className="ml-auto flex items-center">
      <span className="w-[30px] h-[30px] rounded-full bg-[#777270] text-[#e5e5e5] text-[12px] flex items-center justify-center">KM</span>
      <button aria-label="Minimise" className="ml-9"><Minus className="w-[18px] h-[18px]" strokeWidth={1.5} /></button>
      <button aria-label="Restore" className="ml-11">
        <svg className="w-[14px] h-[14px]" viewBox="0 0 14 14" fill="none" stroke="#333" strokeWidth="1.400">
          <rect x="1" y="3.500" width="9.500" height="9.500" rx="1.500" />
          <path d="M4 1h6.500A2.500 2.500 0 0 1 13 3.500V10" />
        </svg>
      </button>
      <button aria-label="Close" className="ml-11"><X className="w-5 h-5" strokeWidth={1.5} /></button>
    </div>
  </header>
);

const TabRow = () => (
  <nav className="h-[38px] shrink-0 flex items-center gap-x-[1px] pl-[14px] pr-2 text-[16px] text-[#3b3b3b]">
    {tabs.map((tab, i) => (
      <a
        key={tab}
        href="#"
        className={`h-9 flex items-center whitespace-nowrap relative ${i === 0 ? 'mr-[9px]' : ''} ${i > 8 && i < 13 ? 'px-[13px]' : 'px-3'} ${
          tab === 'Insert' ? "font-semibold text-[#222] after:content-[''] after:absolute after:inset-x-3 after:bottom-[3px] after:h-[3px] after:bg-[#0f7540]" : ''
        } ${i > 13 ? 'text-[#24744b]' : ''}`}
      >
        {tab}
      </a>
    ))}
    <button className="ml-auto w-[118px] h-[30px] flex items-center justify-center gap-[6px] bg-[#fdfdfd] border border-[#9a9a9a] rounded">
      <svg className="w-[14px] h-[14px]" viewBox="0 0 14 14" fill="none" stroke="#444" strokeWidth="1.300"><path d="M1 1h12v9H5l-2.500 3v-3H1z" /></svg>
      Comments
    </button>
    <button className="ml-[9px] w-[90px] h-[30px] flex items-center justify-center gap-[6px] bg-[#0b7040] text-white rounded">
      <svg className="w-[15px] h-[15px]" viewBox="0 0 15 15" fill="none" stroke="#fff" strokeWidth="1.300"><path d="M5 4H1v10h12v-4M4 10c0-4 3-5.500 6-5.500V1.500L14 6l-4 4V7.500C7 7.500 5.500 8 4 10z" /></svg>
      Share
      <Caret />
    </button>
  </nav>
);

const FormulaBar = () => (
  <div className="h-[29px] mt-[11px] mb-2 mx-[10px] mr-1 shrink-0 flex text-[#444]">
    <label className="w-[126px] pr-[4px] flex items-center bg-[#fdfdfd] border border-[#dedede] rounded">
      <input aria-label="Name box" defaultValue="D7" className="flex-1 min-w-0 pl-[6px] text-[14px]" />
      <ChevronDown className="w-4 h-4" />
    </label>
    <span className="w-[26px] flex items-center justify-center font-bold">⋮</span>
    <div className="w-[106px] pl-[5px] flex items-center gap-[9px] bg-[#fdfdfd] border border-[#dedede] rounded text-[#b5b5b5]">
      <button aria-label="Cancel"><X className="w-5 h-5" strokeWidth={1.5} /></button>
      <button aria-label="Enter"><Check className="w-5 h-5" strokeWidth={1.5} /></button>
      <button className="font-['Liberation_Serif',serif] italic font-bold text-[20px] leading-5 text-[#444]">fx</button>
      <ChevronDown className="w-[14px] h-[14px] shrink-0 -ml-1" />
    </div>
    <label className="flex-1 ml-[7px] pr-[3px] flex items-center bg-[#fdfdfd] border border-[#dedede] rounded">
      <input aria-label="Formula" defaultValue="107" className="flex-1 pl-3 text-[14px]" />
      <ChevronDown className="w-4 h-4" />
    </label>
  </div>
);

const App = () => (
  <div className="h-screen bg-black overflow-hidden font-['Open_Sans',sans-serif]">
    <div className="relative h-full flex flex-col bg-[#efeeee] rounded-tl-lg overflow-hidden">
      <TitleBar />
      <TabRow />
      <Ribbon />
      <FormulaBar />
      <main className="flex-1 min-h-0 flex">
        <div className="flex-1 min-w-0 flex flex-col">
          <div className="flex-1 min-h-0 flex">
            <div className="flex-1 min-w-0 relative overflow-hidden bg-[#fdfdfd]">
              <Sheet />
              <PivotChart />
            </div>
            <div className="w-[25px] shrink-0 flex flex-col items-center bg-[#efefef] pt-[7px] pb-1">
              <span className="border-x-[6px] border-b-8 border-x-transparent border-b-[#666]" />
              <span className="mt-[6px] w-[11px] h-[325px] rounded-full bg-[#6b6b6b]" />
              <span className="mt-auto border-x-[6px] border-t-8 border-x-transparent border-t-[#555]" />
            </div>
          </div>
          <SheetTabs />
        </div>
        <FieldList />
        <div className="w-[43px] shrink-0 flex flex-col bg-[#fdfdfd]">
          <button aria-label="Format" className="h-[50px] flex items-center justify-center pt-1 pl-2">
            <svg className="w-6 h-6" viewBox="0 0 24 24" fill="none" stroke="#444" strokeWidth="1.400">
              <path d="M8 2l6 5-7 8-6-5zM8 2V0M14 7l1 5" />
              <path d="M22 7L12 18l2 2 9-11z" fill="#ddd" />
              <path d="M12 17c-3 0-3 5-8 5 4 3 10 2 10-2z" fill="#5aa7ea" stroke="#1f6fc0" />
            </svg>
          </button>
          <button aria-label="PivotTable fields" className="h-[50px] pl-1 flex items-center justify-center bg-[#e9e9e9] border border-r-0 border-[#777] rounded-l-lg">
            <svg className="w-[18px] h-[23px]" viewBox="0 0 18 23" fill="#fff" stroke="#444" strokeWidth="1.300">
              <path d="M1 1h16v21H1z" />
              <path d="M4 5h10M4 9h10M1 14h16M1 18h16M9 14v8" />
            </svg>
          </button>
        </div>
      </main>
      <Watermark />
      <div className="absolute inset-x-0 bottom-0 z-40 h-[90px] pointer-events-none bg-gradient-to-b from-black/0 to-black/30" />
    </div>
  </div>
);

export default App;
